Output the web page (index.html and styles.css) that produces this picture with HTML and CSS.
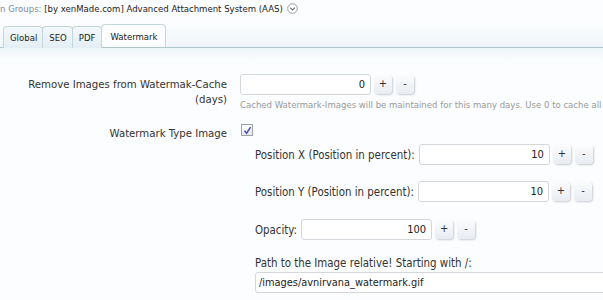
FILE: index.html
```html
<!DOCTYPE html>
<html>
<head>
<meta charset="utf-8">
<link rel="stylesheet" href="styles.css">
</head>
<body>
<div class="crumb"><span class="muted">n Groups:</span> [by xenMade.com] Advanced Attachment System (AAS) <svg class="chev" width="11" height="11" viewBox="0 0 11 11"><circle cx="5.5" cy="5.5" r="4.8" fill="#fff" stroke="#8a8f96" stroke-width="0.9"/><path d="M3.2 4.6 L5.5 6.9 L7.8 4.6" fill="none" stroke="#6a7078" stroke-width="1.1"/></svg></div>
<div class="tabbar">
  <ul class="tabs">
    <li class="tab">Global</li>
    <li class="tab">SEO</li>
    <li class="tab">PDF</li>
    <li class="tab active">Watermark</li>
  </ul>
</div>
<div class="form">
  <div class="row">
    <div class="label">Remove Images from Watermak-Cache<br>(days)</div>
    <div class="ctrl">
      <div class="spin">
        <div class="input num w130">0</div>
        <span class="btn">+</span><span class="btn">-</span>
      </div>
      <div class="hint">Cached Watermark-Images will be maintained for this many days. Use 0 to cache all</div>
    </div>
  </div>
  <div class="row row2">
    <div class="label">Watermark Type Image</div>
    <div class="ctrl">
      <span class="check"><svg width="9" height="9" viewBox="0 0 9 9"><path d="M1.5 4.8 L3.6 7.2 L7.6 1.2" fill="none" stroke="#4a4fb0" stroke-width="1.5"/></svg></span>
      <div class="sub">
        <div class="subrow">
          <span class="sublabel">Position X (Position in percent):</span>
          <div class="spin"><div class="input num w130">10</div><span class="btn">+</span><span class="btn">-</span></div>
        </div>
        <div class="subrow">
          <span class="sublabel">Position Y (Position in percent):</span>
          <div class="spin"><div class="input num w130">10</div><span class="btn">+</span><span class="btn">-</span></div>
        </div>
        <div class="subrow">
          <span class="sublabel">Opacity:</span>
          <div class="spin"><div class="input num w130">100</div><span class="btn">+</span><span class="btn">-</span></div>
        </div>
        <div class="subblock">
          <div class="sublabel">Path to the Image relative! Starting with /:</div>
          <div class="input wide">/images/avnirvana_watermark.gif</div>
        </div>
      </div>
    </div>
  </div>
</div>
</body>
</html>
```
FILE: styles.css
```css
html, body {
  margin: 0;
  padding: 0;
  background: #fcfdfe;
  overflow: hidden;
  width: 603px;
  height: 300px;
}
body {
  font-family: "DejaVu Sans Condensed", "DejaVu Sans", sans-serif;
  color: #333;
}
.crumb {
  height: 17px;
  line-height: 17px;
  font-size: 9.5px;
  color: #222;
  white-space: nowrap;
  background: #fcfdfe;
}
.crumb .muted { color: #7d8a96; }
.chev { vertical-align: -2px; margin-left: 1px; }

.tabbar {
  margin-top: 8px;
  height: 22px;
  border-bottom: 1px solid #adc7cb;
  background: linear-gradient(#fcfdfe, #eef5f9);
  padding-left: 3px;
}
.tabs {
  list-style: none;
  margin: 0;
  padding: 0;
  display: flex;
  height: 22px;
}
.tab {
  font-size: 9.5px;
  color: #222;
  height: 21px;
  line-height: 21px;
  padding: 0 5px 0 6px;
  margin-top: 1px;
  border: 1px solid #c2d6dc;
  border-bottom: none;
  border-radius: 4px 4px 0 0;
  background: linear-gradient(#f3f8fb, #e3eef4);
  margin-right: -1px;
}
.tab.active {
  background: #fcfdfe;
  height: 22px;
  margin-top: -1px;
  line-height: 23px;
  padding: 0 7px 0 9px;
  margin-bottom: -1px;
  color: #222;
}

.form {
  background: linear-gradient(#eef5f9, #fcfdfe 14px);
  padding-top: 26px;
}
.row {
  display: flex;
}
.label {
  width: 227px;
  text-align: right;
  font-size: 11.3px;
  line-height: 15px;
  color: #333;
  padding-top: 3px;
}
.ctrl {
  margin-left: 13px;
  flex: 1;
  min-width: 0;
}
.spin {
  display: flex;
  align-items: center;
}
.input {
  box-sizing: border-box;
  height: 21px;
  line-height: 19px;
  border: 1px solid #d3d7dc;
  border-radius: 3px;
  background: #fff;
  font-size: 11px;
  color: #222;
  padding: 0 5px;
  white-space: nowrap;
  overflow: hidden;
}
.num { text-align: right; }
.w130 { width: 131px; }
.btn {
  box-sizing: border-box;
  width: 18px;
  height: 19px;
  line-height: 18px;
  text-align: center;
  font-size: 11px;
  color: #333;
  border-radius: 4px;
  background: linear-gradient(#fbfcfd, #e8ecf1);
  box-shadow: 1px 1px 2px rgba(100,110,130,0.35);
  margin-left: 3px;
}
.btn + .btn { margin-left: 4px; }
.hint {
  font-size: 9.5px;
  color: #9a9a9a;
  margin-top: 4px;
  white-space: nowrap;
}
.row2 { margin-top: 13px; }
.check {
  display: block;
  box-sizing: border-box;
  width: 12px;
  height: 12px;
  border: 1px solid #9aa2ae;
  background: linear-gradient(#fff, #e6e8ee);
  margin-left: 1px;
  margin-top: 1px;
  padding: 0.5px 0 0 0.5px;
}
.check svg { display: block; }
.sub {
  margin-left: 15px;
  margin-top: 8px;
}
.subrow {
  display: flex;
  align-items: center;
  margin-bottom: 16px;
}
.subrow:nth-child(2) { margin-bottom: 17px; }
.sublabel {
  font-size: 11.4px;
  line-height: 14px;
  color: #333;
  margin-right: 4px;
  white-space: nowrap;
}
.subblock { margin-top: 1px; }
.subblock .sublabel { margin-bottom: 2px; }
.wide {
  width: 360px;
  font-size: 10.9px;
  padding-left: 3px;
}
```
